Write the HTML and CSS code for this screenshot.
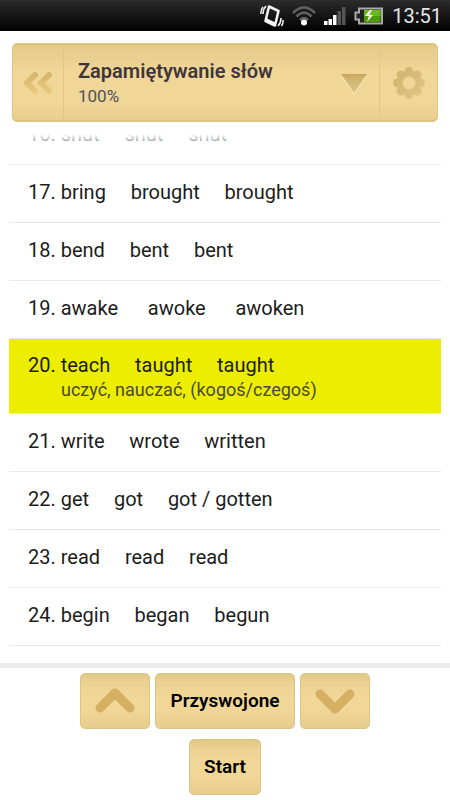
FILE: index.html
```html
<!DOCTYPE html>
<html lang="pl">
<head>
<meta charset="utf-8">
<meta name="viewport" content="width=device-width, initial-scale=1">
<title>Zapamiętywanie słów</title>
<link rel="stylesheet" href="styles.css">
</head>
<body>
<div class="status">
  <svg width="24" height="24" viewBox="0 0 24 24" fill="none" stroke="#f4f4f4">
    <path d="M9 2.500L18.500 7 15 21.500 5.500 17z" stroke-width="2.500" stroke-linejoin="round"/>
    <path d="M6 15.500l9.500 4.500" stroke-width="2.500"/>
    <path d="M6 2Q3 5 3 10M3 3Q.5 6 1 10M18 22q3-3 3-8M21.500 22q2-3 1.500-6" stroke-width="1.500"/>
  </svg>
  <svg class="wifi" width="24" height="20" viewBox="0 0 24 20" fill="none" stroke="#626262" stroke-width="2.500">
    <path d="M1 7Q12-4 23 7M4.500 10.500Q12 3 19.500 10.500M8 14Q12 10 16 14"/>
    <circle cx="12" cy="16.500" r="3" fill="#fff" stroke="none"/>
  </svg>
  <svg class="signal" width="22" height="18" viewBox="0 0 22 18">
    <path fill="#fff" d="M0 14h3.500v4H0zM4.500 12H8v6H4.500zM9 8h3.500v10H9z"/>
    <path fill="#555" d="M13.500 4H17v14h-3.500zM18 0h3.500v18H18z"/>
  </svg>
  <svg class="battery" width="30" height="18" viewBox="0 0 30 18">
    <path d="M5 1.500h23v15H5v-4H1.500v-7H5z" fill="#222" stroke="#aaa" stroke-width="2"/>
    <path d="M10 3h16.500v12H10z" fill="#4c9c08"/>
    <path d="M10 3h16.500v6H10z" fill="#68b91c"/>
    <path d="M16 3l-5 6h4l-2 6 6-7h-4l3-5z" fill="#fff"/>
  </svg>
  <time class="clock">13:51</time>
</div>

<header class="toolbar">
  <button class="tool back" aria-label="Wstecz">
    <svg width="32" height="28" viewBox="0 0 32 28" fill="none" stroke-width="6" stroke-linecap="round" stroke-linejoin="round">
      <defs><linearGradient id="fade" x1="0" y1="0" x2="0" y2="1"><stop offset="0" stop-color="#d6b66e"/><stop offset="1" stop-color="#e8c87c"/></linearGradient></defs>
      <path stroke="url(#fade)" d="M13 6L5 14l8 8M27 6l-8 8 8 8"/>
    </svg>
  </button>
  <div class="heading">
    <h1 class="title">Zapamiętywanie słów</h1>
    <p class="progress">100%</p>
  </div>
  <button class="tool expand" aria-label="Rozwiń">
    <svg width="26" height="21" viewBox="0 0 26 21">
      <defs><linearGradient id="arrow" x1="0" y1="0" x2="0" y2="1"><stop offset="0" stop-color="#c9a459"/><stop offset=".2" stop-color="#d0b46f"/><stop offset="1" stop-color="#dac487"/></linearGradient></defs>
      <path fill="#f8e7b7" d="M0 2h26L13 21z"/>
      <path fill="url(#arrow)" d="M0 0h26L13 19z"/>
    </svg>
  </button>
  <button class="tool settings" aria-label="Ustawienia">
    <svg width="34" height="34" viewBox="0 0 34 34">
      <defs>
        <linearGradient id="gear" x1="0" y1="0" x2="1" y2="1"><stop offset="0" stop-color="#ceb06b"/><stop offset="1" stop-color="#e2c886"/></linearGradient>
        <mask id="hole"><path fill="#fff" d="M0 0h34v34H0z"/><circle cx="17" cy="17" r="6"/></mask>
        <clipPath id="petals">
          <circle cx="17" cy="17" r="12"/><circle cx="17" cy="5.500" r="4.500"/><circle cx="25" cy="9" r="4.500"/><circle cx="28.500" cy="17" r="4.500"/><circle cx="25" cy="25" r="4.500"/><circle cx="17" cy="28.500" r="4.500"/><circle cx="9" cy="25" r="4.500"/><circle cx="5.500" cy="17" r="4.500"/><circle cx="9" cy="9" r="4.500"/>
        </clipPath>
      </defs>
      <g mask="url(#hole)"><path clip-path="url(#petals)" fill="url(#gear)" d="M0 0h34v34H0z"/></g>
      <circle cx="17" cy="17" r="6" fill="none" stroke="#f0d79a"/>
    </svg>
  </button>
</header>

<main class="viewport">
  <ol class="words">
    <li class="row">16. shut     shut     shut</li>
    <li class="row">17. bring     brought     brought</li>
    <li class="row">18. bend     bent     bent</li>
    <li class="row">19. awake      awoke      awoken</li>
    <li class="row current">20. teach     taught     taught<p class="meaning">uczyć, nauczać, (kogoś/czegoś)</p></li>
    <li class="row">21. write     wrote     written</li>
    <li class="row">22. get     got     got / gotten</li>
    <li class="row">23. read     read     read</li>
    <li class="row">24. begin     began     begun</li>
  </ol>
</main>

<footer class="actions">
  <div class="group">
    <button class="button" aria-label="Poprzednie">
      <svg width="40" height="28" viewBox="0 0 40 28" fill="none" stroke="#d5b062" stroke-width="9" stroke-linecap="round" stroke-linejoin="round"><path d="M5 21L20 6l15 15"/></svg>
    </button>
    <button class="button">Przyswojone</button>
    <button class="button" aria-label="Następne">
      <svg width="40" height="28" viewBox="0 0 40 28" fill="none" stroke="#d5b062" stroke-width="9" stroke-linecap="round" stroke-linejoin="round"><path d="M5 7l15 15L35 7"/></svg>
    </button>
  </div>
  <button class="button">Start</button>
</footer>
</body>
</html>
```
FILE: styles.css
```css
* { box-sizing: border-box; }

body {
  margin: 0;
  height: 100vh;
  display: flex;
  flex-direction: column;
  background: #fff;
  color: #1c1c1c;
  font-family: Roboto, "Liberation Sans", sans-serif;
}

svg { display: block; flex: none; }

button {
  font: inherit;
  color: #000;
  cursor: pointer;
}

.status {
  display: flex;
  align-items: center;
  justify-content: flex-end;
  gap: 8px;
  padding: 4px 8px 3px;
  background: linear-gradient(#2c2c2c, #000);
}

.clock {
  color: #e6e6e6;
  font-size: 20px;
  line-height: 24px;
}

.toolbar {
  display: flex;
  margin: 12px 12px 12px;
  border: 1px solid #e1c587;
  border-radius: 5px;
  background: linear-gradient(#e5cb89, #e9d092 20%, #f0d797 35%, #f0d797 75%, #e7ce8e);
  box-shadow: inset 0 1px #d8bd7b, inset 0 -1px #dcc180;
}

.tool {
  display: flex;
  align-items: center;
  justify-content: center;
  padding: 0;
  border: 0;
  background: none;
}

.back {
  width: 51px;
  border-right: 1px solid #e0c586;
}

.heading {
  flex: 1;
  min-width: 0;
  padding: 13px 0 14px 14px;
}

.title {
  margin: 0;
  color: #40363a;
  font-size: 20px;
  font-weight: 600;
  line-height: 28px;
}

.progress {
  margin: 0;
  color: #50505a;
  font-size: 17px;
  line-height: 22px;
}

.expand { width: 50px; padding-top: 4px; }

.settings {
  width: 58px;
  border-left: 1px solid #e0c586;
}

.viewport {
  position: relative;
  flex: 1;
  min-height: 0;
  overflow: hidden;
  padding: 0 9px;
}

.viewport::before {
  content: "";
  position: absolute;
  inset: 0 0 auto;
  height: 12px;
  background: linear-gradient(#fff, #fff5);
}

.words {
  margin: -27px 0 0;
  padding: 0;
  list-style: none;
}

.row {
  padding: 13px 19px 16px;
  border-bottom: 1px solid #e8e8e8;
  font-size: 20px;
  line-height: 28px;
  white-space: pre-wrap;
}

.current {
  padding: 12px 19px;
  background: #eded00;
}

.meaning {
  margin: 0;
  padding-left: 33px;
  color: #4a4a35;
  font-size: 18px;
  line-height: 22px;
}

.actions {
  display: flex;
  flex-direction: column;
  align-items: center;
  gap: 10px;
  padding: 5px;
  border-top: 5px solid #ececec;
}

.group { display: flex; gap: 5px; }

.button {
  display: flex;
  align-items: center;
  justify-content: center;
  padding: 13px 14px;
  border: 1px solid #dfc383;
  border-radius: 5px;
  background: linear-gradient(#e2c884, #ebd193 15%, #f0d797 40%, #f0d797 65%, #e6cd8e);
  font-size: 19px;
  font-weight: 600;
  line-height: 28px;
}
```
